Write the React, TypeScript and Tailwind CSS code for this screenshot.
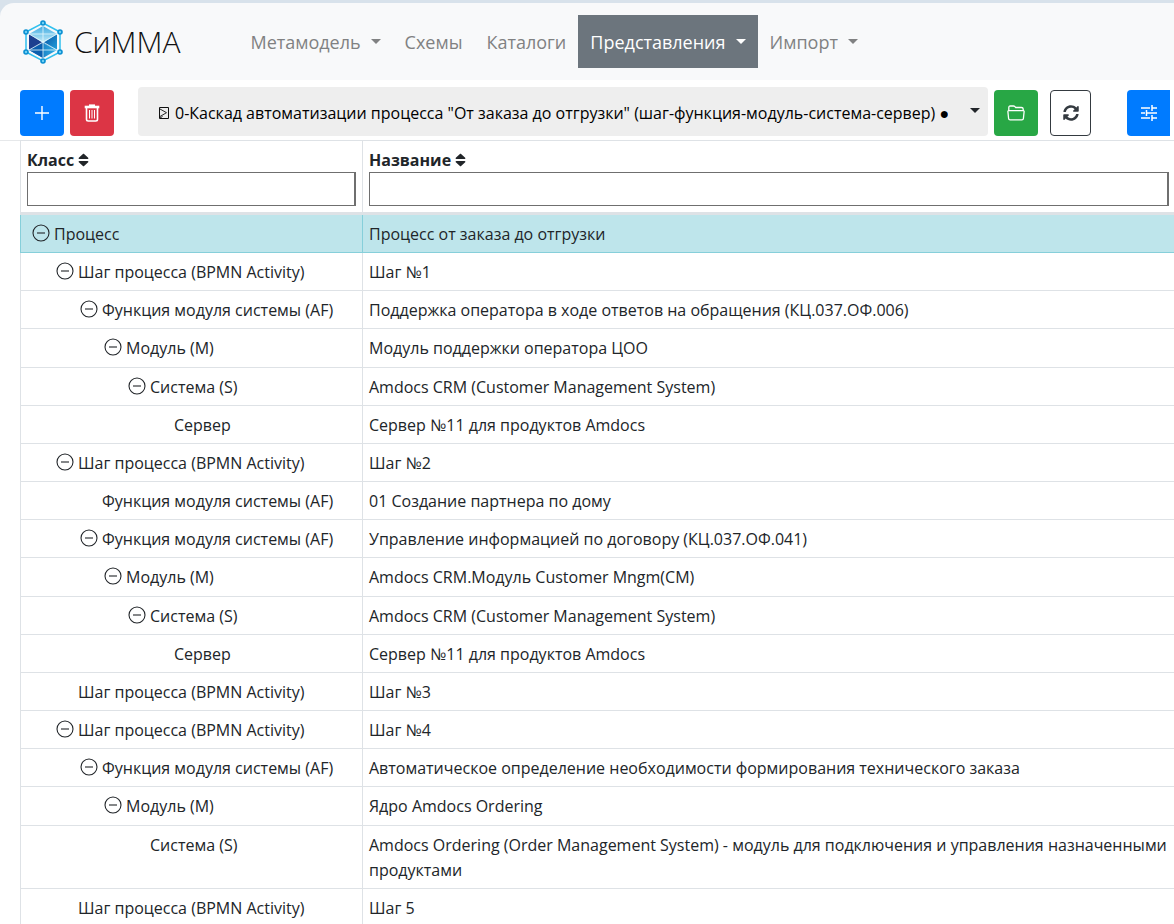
import React from "react";
import { FaSort } from "react-icons/fa";

type Row = { depth: number; kind: string; name: string; open?: boolean; selected?: boolean };

const STEP = "Шаг процесса (BPMN Activity)";
const FUNC = "Функция модуля системы (AF)";
const MODULE = "Модуль (М)";
const SYSTEM = "Система (S)";
const SERVER = "Сервер";

const rows: Row[] = [
  { depth: 0, kind: "Процесс", name: "Процесс от заказа до отгрузки", open: true, selected: true },
  { depth: 1, kind: STEP, name: "Шаг №1", open: true },
  { depth: 2, kind: FUNC, name: "Поддержка оператора в ходе ответов на обращения (КЦ.037.ОФ.006)", open: true },
  { depth: 3, kind: MODULE, name: "Модуль поддержки оператора ЦОО", open: true },
  { depth: 4, kind: SYSTEM, name: "Amdocs CRM (Customer Management System)", open: true },
  { depth: 5, kind: SERVER, name: "Сервер №11 для продуктов Amdocs" },
  { depth: 1, kind: STEP, name: "Шаг №2", open: true },
  { depth: 2, kind: FUNC, name: "01 Создание партнера по дому" },
  { depth: 2, kind: FUNC, name: "Управление информацией по договору (КЦ.037.ОФ.041)", open: true },
  { depth: 3, kind: MODULE, name: "Amdocs CRM.Модуль Customer Mngm(CM)", open: true },
  { depth: 4, kind: SYSTEM, name: "Amdocs CRM (Customer Management System)", open: true },
  { depth: 5, kind: SERVER, name: "Сервер №11 для продуктов Amdocs" },
  { depth: 1, kind: STEP, name: "Шаг №3" },
  { depth: 1, kind: STEP, name: "Шаг №4", open: true },
  { depth: 2, kind: FUNC, name: "Автоматическое определение необходимости формирования технического заказа", open: true },
  { depth: 3, kind: MODULE, name: "Ядро Amdocs Ordering", open: true },
  { depth: 4, kind: SYSTEM, name: "Amdocs Ordering (Order Management System) - модуль для подключения и управления назначенными продуктами" },
  { depth: 1, kind: STEP, name: "Шаг 5" },
];

const indents = ["pl-[11px]", "pl-[35px]", "pl-[59px]", "pl-[83px]", "pl-[107px]", "pl-[131px]"];

function Caret({ className = "" }: { className?: string }) {
  return (
    <svg viewBox="0 0 10 5" className={`h-[5px] w-[10px] fill-current ${className}`} aria-hidden="true">
      <path d="M0 0h10L5 5z" />
    </svg>
  );
}

function Logo() {
  const nodes = [
    [22, 4], [39, 13], [39, 33], [22, 42], [5, 33], [5, 13],
  ];
  return (
    <svg viewBox="0 0 44 46" className="h-[46px] w-11 shrink-0" aria-hidden="true">
      <defs>
        <linearGradient id="top" x1="0" y1="0" x2="0" y2="1">
          <stop offset="0" stopColor="#3fabe2" />
          <stop offset="1" stopColor="#c5ecf8" />
        </linearGradient>
        <linearGradient id="right" x1="0" y1="0" x2="1" y2="1">
          <stop offset="0" stopColor="#0a4fa0" />
          <stop offset="1" stopColor="#1fa0dc" />
        </linearGradient>
        <linearGradient id="base" x1="0" y1="0" x2="1" y2="0">
          <stop offset="0" stopColor="#0a5cab" />
          <stop offset="1" stopColor="#31b0e6" />
        </linearGradient>
      </defs>
      <path d="M22 4 39 13V33L22 42 5 33V13Z" fill="none" stroke="#2fc0ee" strokeWidth="1.5" />
      <path d="M22 7 36 15 22 24 8 15Z" fill="url(#top)" />
      <path d="M8 15 22 24 8 31Z" fill="#1c3f8f" />
      <path d="M36 15V31L22 24Z" fill="url(#right)" />
      <path d="M8 31 22 24 36 31 22 39Z" fill="url(#base)" />
      <path d="M22 24V39L8 31Z" fill="#0b5fae" />
      <path d="M22 7V39M8 15 36 31M36 15 8 31M8 15H36M8 31H36" stroke="#e4f7fd" strokeWidth="0.8" fill="none" />
      {nodes.map(([x, y]) => (
        <circle key={`${x}-${y}`} cx={x} cy={y} r="2" fill="#6fd0f2" stroke="#0b8fd2" strokeWidth="1.6" />
      ))}
    </svg>
  );
}

function NavLink({ label, menu, active }: { label: string; menu?: boolean; active?: boolean }) {
  return (
    <a
      href="#"
      className={`flex h-[53px] items-center gap-[10px] whitespace-nowrap px-3 text-lg ${
        active ? "bg-[#6c757d] text-white" : "text-[#808182]"
      }`}
    >
      {label}
      {menu && <Caret />}
    </a>
  );
}

function MinusToggle() {
  return (
    <button type="button" aria-label="Свернуть" className="mt-[2px] flex h-[18px] w-[18px] shrink-0">
      <svg viewBox="0 0 18 18" className="h-[18px] w-[18px]" fill="none" stroke="#212529" strokeWidth="1.1">
        <circle cx="9" cy="9" r="8" />
        <path d="M5 9h8" />
      </svg>
    </button>
  );
}

function HeaderCell({ id, label, className }: { id: string; label: string; className: string }) {
  return (
    <th scope="col" className={`border-l border-t border-b-[3px] border-[#dee2e6] pb-[6px] pl-[6px] pt-[7px] text-left align-top ${className}`}>
      <label htmlFor={id} className="flex h-6 items-center gap-1 font-bold">
        {label}
        <FaSort className="h-4 w-[11px]" preserveAspectRatio="none" />
      </label>
      <input id={id} type="text" className="block h-[34px] w-full border border-r-2 border-[#6f6f6f] bg-white px-1 font-normal outline-none" />
    </th>
  );
}

export default function App() {
  return (
    <div className="h-screen overflow-hidden bg-white font-['Open_Sans','Noto_Sans',sans-serif] text-base leading-[25px] text-[#212529]">
      <div className="bg-[#d8e2eb] pt-[3px]">
        <header className="flex h-[77px] items-center rounded-tl-[14px] bg-[#f8f9fa] pl-[21px]">
          <a href="#" className="mr-[58px] flex items-center gap-[9px] text-[30px] font-light leading-[42px] text-[#111]">
            <Logo />
            СиММА
          </a>
          <nav className="flex items-center">
            <NavLink label="Метамодель" menu />
            <NavLink label="Схемы" />
            <NavLink label="Каталоги" />
            <NavLink label="Представления" menu active />
            <NavLink label="Импорт" menu />
          </nav>
        </header>
      </div>

      <div className="flex h-[60px] items-end gap-[6px] pb-1 pl-5 pr-1">
        <button type="button" aria-label="Добавить" className="flex h-[46px] w-11 shrink-0 items-center justify-center rounded bg-[#007bff] text-white">
          <svg viewBox="0 0 16 16" className="h-4 w-4" stroke="currentColor" strokeWidth="1.4" aria-hidden="true">
            <path d="M8 1v14M1 8h14" />
          </svg>
        </button>
        <button type="button" aria-label="Удалить" className="flex h-[46px] w-11 shrink-0 items-center justify-center rounded bg-[#dc3545] text-white">
          <svg viewBox="0 0 16 18" className="h-[18px] w-4" fill="none" stroke="currentColor" aria-hidden="true">
            <path d="M5 1.2h6" strokeWidth="1.6" />
            <path d="M0.7 3h14.6" strokeWidth="2.6" />
            <path d="M2.500 4v11.300q0 1.700 1.700 1.700h7.600q1.700 0 1.700-1.700V4" strokeWidth="1.6" />
            <path d="M5.500 6v8.500M8 6v8.500M10.500 6v8.500" strokeWidth="1" />
          </svg>
        </button>
        <div className="relative ml-[18px] min-w-0 flex-1">
          <select
            aria-label="Представление"
            className="block h-[49px] w-full appearance-none rounded bg-[#eee] pb-0 pl-[37px] pr-10 pt-[2px] text-base text-black outline-none"
          >
            <option>0-Каскад автоматизации процесса "От заказа до отгрузки" (шаг-функция-модуль-система-сервер) ●</option>
          </select>
          <svg viewBox="0 0 12 12" className="pointer-events-none absolute left-5 top-5 h-3 w-3" fill="none" stroke="#111" aria-hidden="true">
            <path d="M1.500 0.500h9v11h-9z" />
            <path d="M2 2 8.500 5.700 2 9.500M2 11 4.500 9.500" strokeWidth="0.9" />
          </svg>
          <Caret className="pointer-events-none absolute right-2 top-[21px]" />
        </div>
        <button type="button" aria-label="Открыть" className="flex h-[46px] w-11 shrink-0 items-center justify-center rounded bg-[#28a745] text-white">
          <svg viewBox="0 0 18 16" className="h-4 w-[18px]" fill="none" stroke="currentColor" strokeWidth="1.3" aria-hidden="true">
            <path d="M1.800 6V2.600Q1.800 1 3.300 1h3.200q.8 0 1.400.6l.8.9h5.800q1.600 0 1.700 1.600V6" />
            <path d="M2 5.600h14q1.200 0 1.100 1.200l-.7 6.700q-.1 1.400-1.500 1.400H3.100q-1.400 0-1.500-1.400L.9 6.800Q.8 5.600 2 5.600Z" />
          </svg>
        </button>
        <button type="button" aria-label="Обновить" className="ml-[6px] flex h-[46px] w-[41px] shrink-0 items-center justify-center rounded border border-[#343a40] bg-white text-[#343a40]">
          <svg viewBox="0 0 512 512" className="h-4 w-4" fill="currentColor" aria-hidden="true">
            <path d="M370.700 133.300C339.500 104 298.900 88 255.800 88c-77.500.1-144.300 53.200-162.800 126.900-1.300 5.400-6.100 9.100-11.700 9.100H24.100c-7.500 0-13.200-6.800-11.800-14.200C33.900 94.900 134.800 8 256 8c66.400 0 126.800 26.100 171.300 68.700L463 41C478.100 25.900 504 36.600 504 57.900V192c0 13.300-10.700 24-24 24H345.900c-21.400 0-32.100-25.900-17-41zM32 296h134.100c21.400 0 32.100 25.900 17 41l-41.800 41.800c31.300 29.300 71.800 45.300 114.900 45.200 77.400-.1 144.300-53.100 162.800-126.800 1.300-5.400 6.100-9.100 11.700-9.100h57.300c7.500 0 13.200 6.800 11.800 14.200C478.100 417.100 377.200 504 256 504c-66.400 0-126.800-26.100-171.300-68.700L49 471C33.900 486.100 8 475.400 8 454.100V320c0-13.300 10.700-24 24-24z" />
          </svg>
        </button>
        <button type="button" aria-label="Настройки" className="ml-[30px] flex h-[46px] w-[43px] shrink-0 items-center justify-center rounded-l bg-[#007bff] text-white">
          <svg viewBox="0 0 18 18" className="h-[18px] w-[18px]" fill="none" stroke="currentColor" strokeWidth="1.5" aria-hidden="true">
            <path d="M1 4h9M12 4h5M12 1v6M1 9h4M7 9h10M6.500 6v6M1 14h9M12 14h5M12 11v6" />
          </svg>
        </button>
      </div>

      <div className="border-t border-[#e6e8ea] pl-5">
        <table className="-mt-px w-full table-fixed border-separate border-spacing-0">
          <colgroup>
            <col className="w-[342px]" />
            <col />
          </colgroup>
          <thead>
            <tr>
              <HeaderCell id="kind" label="Класс" className="pr-[6px]" />
              <HeaderCell id="name" label="Название" className="pr-[5px]" />
            </tr>
          </thead>
          <tbody>
            {rows.map((row, i) => {
              const tone = row.selected ? "border-[#86cfda] bg-[#bee5eb]" : "border-[#dee2e6]";
              const size = row.depth === 3 ? "pt-[7px] pb-[6px]" : "pt-[7px] pb-[5px]";
              return (
                <tr key={i}>
                  <td className={`border-b border-l align-top ${size} ${tone} ${indents[row.depth]}`}>
                    <div className="flex gap-1 whitespace-nowrap">
                      {row.open ? <MinusToggle /> : <span className="w-[18px]" />}
                      {row.kind}
                    </div>
                  </td>
                  <td className={`border-b border-l px-[6px] align-top ${size} ${tone}`}>{row.name}</td>
                </tr>
              );
            })}
          </tbody>
        </table>
      </div>
    </div>
  );
}
